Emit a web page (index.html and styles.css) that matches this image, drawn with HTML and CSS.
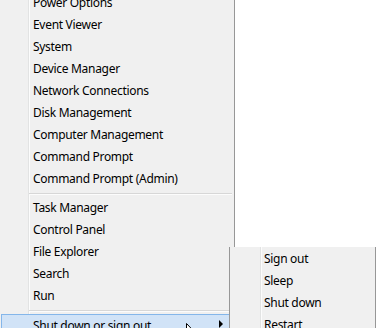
FILE: index.html
```html
<!DOCTYPE html>
<html lang="en">
<head>
    <meta charset="UTF-8">
    <title>Quick Link Menu</title>
    <link rel="stylesheet" href="styles.css">
</head>
<body>
    <div class="desktop">
        <ul class="menu">
            <li class="item">Power Options</li>
            <li class="item">Event Viewer</li>
            <li class="item">System</li>
            <li class="item">Device Manager</li>
            <li class="item">Network Connections</li>
            <li class="item">Disk Management</li>
            <li class="item">Computer Management</li>
            <li class="item">Command Prompt</li>
            <li class="item">Command Prompt (Admin)</li>
            <li class="sep"></li>
            <li class="item">Task Manager</li>
            <li class="item">Control Panel</li>
            <li class="item">File Explorer</li>
            <li class="item">Search</li>
            <li class="item">Run</li>
            <li class="sep"></li>
            <li class="item active">
                Shut down or sign out
                <svg class="cursor" width="12" height="19" viewBox="0 0 12 19">
                    <path d="M0.5 0.5 L0.5 16 L4 12.5 L6.5 18 L8.5 17 L6 11.5 L11 11.5 Z" fill="#fff" stroke="#000" stroke-width="1"/>
                </svg>
                <span class="arrow"></span>
            </li>
        </ul>

        <ul class="submenu">
            <li class="item">Sign out</li>
            <li class="item">Sleep</li>
            <li class="item">Shut down</li>
            <li class="item">Restart</li>
        </ul>
    </div>
</body>
</html>
```

FILE: styles.css
```css
body {
    margin: 0;
    padding: 0;
    background: #ffffff;
    font-family: "Noto Sans", "Open Sans", sans-serif;
    font-size: 12px;
    letter-spacing: -0.3px;
    color: #000;
    overflow: hidden;
}

.desktop {
    position: relative;
    width: 376px;
    height: 328px;
    overflow: hidden;
}

ul {
    list-style: none;
    margin: 0;
    padding: 0;
}

/* Main menu */
.menu {
    width: 234px;
    margin-top: -8px;
    border-right: 1px solid #979797;
    background: linear-gradient(to right, #f0f0f0 28px, #e2e3e3 28px, #e2e3e3 29px, #fcfcfc 29px, #fcfcfc 30px, #f0f0f0 30px);
}

.item {
    position: relative;
    height: 22px;
    line-height: 22px;
    padding-left: 33px;
    white-space: nowrap;
}

.sep {
    height: 7px;
    margin-left: 29px;
    margin-right: 2px;
    background: linear-gradient(to bottom, transparent 3px, #d7d7d7 3px, #d7d7d7 4px, #fcfcfc 4px, #fcfcfc 5px, transparent 5px);
}

.item.active {
    margin-left: 1px;
    padding-left: 31px;
    height: 20px;
    line-height: 22px;
    background: #d1e3f7;
    border: 1px solid #84b6ea;
}

.cursor {
    position: absolute;
    left: 184px;
    top: 8px;
}

.arrow {
    position: absolute;
    left: 217px;
    top: 5px;
    width: 0;
    height: 0;
    border-top: 4px solid transparent;
    border-bottom: 4px solid transparent;
    border-left: 4px solid #000;
}

/* Submenu */
.submenu {
    position: absolute;
    left: 229px;
    top: 247px;
    width: 145px;
    padding-top: 1px;
    border-left: 1px solid #979797;
    border-right: 1px solid #979797;
    background: linear-gradient(to right, #f0f0f0 30px, #e2e3e3 30px, #e2e3e3 31px, #fcfcfc 31px, #fcfcfc 32px, #f0f0f0 32px);
}

.submenu .item {
    padding-left: 34px;
}
```
